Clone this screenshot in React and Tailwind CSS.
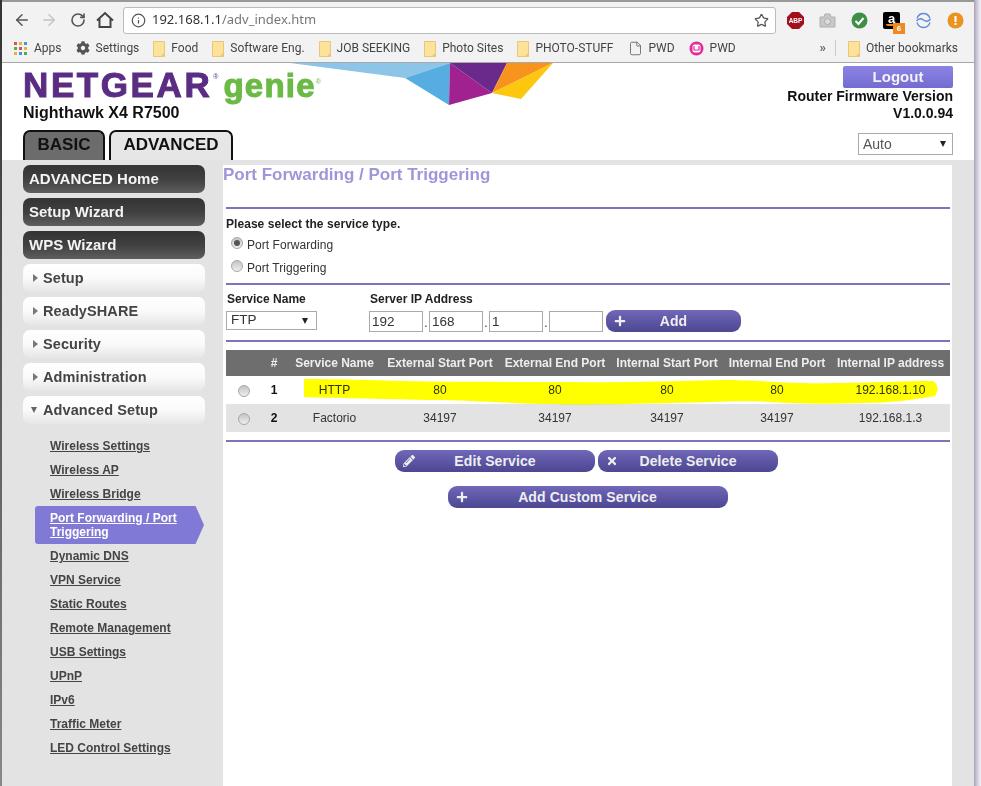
import React from "react";
import { ArrowLeft, ArrowRight, RotateCw, Info, Star, File } from "lucide-react";
import { FaCog, FaPencilAlt, FaTimes, FaPlus } from "react-icons/fa";

const dotColors = [
  "bg-[#d9534f]", "bg-[#e8b23a]", "bg-[#4a8fe0]",
  "bg-[#4caf50]", "bg-[#d9534f]", "bg-[#e8b23a]",
  "bg-[#e8b23a]", "bg-[#4a8fe0]", "bg-[#4caf50]",
];

const subLinks = [
  "Wireless Settings",
  "Wireless AP",
  "Wireless Bridge",
  "Port Forwarding / Port Triggering",
  "Dynamic DNS",
  "VPN Service",
  "Static Routes",
  "Remote Management",
  "USB Settings",
  "UPnP",
  "IPv6",
  "Traffic Meter",
  "LED Control Settings",
];

const rows = [
  { id: 1, name: "HTTP", es: "80", ee: "80", is: "80", ie: "80", ip: "192.168.1.10" },
  { id: 2, name: "Factorio", es: "34197", ee: "34197", is: "34197", ie: "34197", ip: "192.168.1.3" },
];

const Folder = () => (
  <svg width="12" height="17" viewBox="0 0 12 17" className="shrink-0">
    <path d="M0.5 1.5h11v15h-11z" fill="#fde29a" stroke="#e8c777" strokeWidth="1" />
    <path d="M8 16.5l3.500-4v4z" fill="#e8c777" />
  </svg>
);

const Bookmark = ({ icon, label }) => (
  <div className="flex items-center gap-[6px] shrink-0">
    {icon}
    <span>{label}</span>
  </div>
);

const Radio = ({ checked, className }) => (
  <span className={"w-[12px] h-[12px] rounded-full border border-[#a8a8a8] bg-gradient-to-b from-[#c4c4c4] to-[#efefef] flex items-center justify-center shrink-0 " + (className || "")}>
    {checked && <span className="w-[6px] h-[6px] rounded-full bg-[#555]" />}
  </span>
);

const DarkButton = ({ label }) => (
  <div className="h-[28px] rounded-[7px] bg-gradient-to-b from-[#343434] via-[#404040] to-[#5e5e5e] text-[#f4f4f4] font-bold text-[15px] leading-[28px] pl-[6px]">
    {label}
  </div>
);

const LightButton = ({ label, open }) => (
  <div className="h-[28px] rounded-[7px] bg-gradient-to-b from-white via-[#fafafa] to-[#e6e6e6] text-[#444] font-bold text-[14.5px] tracking-[0.1px] leading-[26px] flex items-center">
    {open ? (
      <span className="ml-[8px] mr-[6px] w-0 h-0 border-l-[3px] border-r-[3px] border-t-[6px] border-l-transparent border-r-transparent border-t-[#666]" />
    ) : (
      <span className="ml-[10px] mr-[5px] w-0 h-0 border-t-[4px] border-b-[4px] border-l-[5px] border-t-transparent border-b-transparent border-l-[#777]" />
    )}
    <span>{label}</span>
  </div>
);

const PurpleButton = ({ icon, label, className }) => (
  <div className={"relative h-[22px] rounded-[9px] bg-gradient-to-b from-[#7067b8] to-[#4d4792] text-[#eeeeee] font-bold text-[14px] tracking-[0.1px] leading-[22px] text-center " + className}>
    <span className="absolute left-[8px] top-0 h-[22px] flex items-center text-[12px]">{icon}</span>
    {label}
  </div>
);

const Divider = () => <div className="h-[2px] bg-[#7d74b9]" />;

const Field = ({ value }) => (
  <input
    readOnly
    defaultValue={value}
    className="w-[54px] h-[21px] border border-[#aaa] bg-white text-[13.5px] text-[#333] px-[2px] outline-none"
  />
);

export default function App() {
  return (
    <div className="w-[981px] h-[786px] overflow-hidden flex bg-[#f4f1f6] font-['Liberation_Sans',Arial,sans-serif]">
      <div className="w-[2px] bg-gradient-to-b from-[#333] to-[#888]" />

      <div className="w-[972px] flex flex-col">
        {/* browser chrome */}
        <div className="h-[6px] bg-[#f2f2f2] border-t-2 border-[#999]" />
        <div className="h-[28px] bg-[#f2f2f2] flex items-center pl-[11px] text-[#5a5a5a]">
          <ArrowLeft size={18} strokeWidth={2} className="text-[#555] shrink-0" />
          <ArrowRight size={18} strokeWidth={2} className="text-[#c4c4c4] ml-[9px] shrink-0" />
          <RotateCw size={16} strokeWidth={2.4} className="text-[#555] ml-[12px] shrink-0" />
          <svg width="18" height="18" viewBox="0 0 18 18" className="ml-[10px] shrink-0">
            <path d="M1 9.500L9 2l8 7.500M3.500 8v8h11V8" fill="none" stroke="#444" strokeWidth="2" />
          </svg>
          <div className="ml-[9px] w-[653px] shrink-0 h-[27px] bg-white border border-[#bbb] rounded-[3px] flex items-center pl-[7px] pr-[6px] font-['Noto_Sans',sans-serif] text-[13px]">
            <Info size={15} className="text-[#555]" />
            <span className="ml-[6px] text-[#333]">192.168.1.1</span>
            <span className="text-[#777]">/adv_index.htm</span>
            <Star size={15} strokeWidth={2} className="ml-auto text-[#555]" />
          </div>
          <div className="flex items-center ml-[11px] gap-[15px]">
            <svg width="17" height="17" viewBox="0 0 17 17">
              <polygon points="5,0 12,0 17,5 17,12 12,17 5,17 0,12 0,5" fill="#a3101c" />
              <text x="8.500" y="11" textAnchor="middle" fontSize="6.500" fontWeight="700" fill="#fff" fontFamily="Liberation Sans">ABP</text>
            </svg>
            <svg width="17" height="17" viewBox="0 0 17 17">
              <path d="M1 5h4l1-3h5l1 3h4v10H1z" fill="#c8c8c8" stroke="#b0b0b0" />
              <circle cx="8.500" cy="9.500" r="3" fill="#ddd" stroke="#aaa" />
            </svg>
            <svg width="17" height="17" viewBox="0 0 17 17">
              <circle cx="8.500" cy="8.500" r="8" fill="#3f8f45" />
              <path d="M4.500 9l3 3 5-6" fill="none" stroke="#fff" strokeWidth="2" />
            </svg>
            <div className="relative w-[17px] h-[17px] bg-black rounded-[2px] text-white text-[13px] font-bold leading-[13px] text-center">
              a
              <span className="absolute left-[3px] top-[12px] w-[8px] h-[2px] rounded-b-full bg-[#ee8a1e]" />
              <span className="absolute left-[10px] top-[11px] w-[12px] h-[11px] bg-[#ee8a1e] text-white text-[8px] leading-[11px] font-bold">6</span>
            </div>
            <svg width="17" height="17" viewBox="0 0 17 17">
              <path d="M2 6.500C3 3.500 5.500 1.500 8.500 1.500s5.500 2 6.500 5M2 10.500c1 3 3.500 5 6.500 5s5.500-2 6.500-5" fill="none" stroke="#5a8ad8" strokeWidth="1.300" />
              <path d="M1.500 9c2.500-3 4.500-3 7-1s4.500 2 7-1" fill="none" stroke="#5a8ad8" strokeWidth="1.300" />
            </svg>
            <svg width="17" height="17" viewBox="0 0 17 17">
              <circle cx="8.500" cy="8.500" r="8" fill="#ea9320" />
              <rect x="7.500" y="4" width="2" height="6" fill="#fff" />
              <rect x="7.500" y="11" width="2" height="2" fill="#fff" />
            </svg>
          </div>
        </div>
        <div className="h-[29px] bg-[#f2f2f2] border-b border-[#a8a8a8] flex items-center pl-[12px] pr-[16px] text-[12px] text-[#444] font-['Roboto',sans-serif] gap-[14px]">
          <Bookmark
            label="Apps"
            icon={
              <div className="grid grid-cols-3 gap-[2px] w-[13px] mr-[1px]">
                {dotColors.map((c, i) => (
                  <span key={i} className={"w-[3px] h-[3px] " + c} />
                ))}
              </div>
            }
          />
          <Bookmark label="Settings" icon={<FaCog size={14} className="text-[#555]" />} />
          <Bookmark label="Food" icon={<Folder />} />
          <Bookmark label="Software Eng." icon={<Folder />} />
          <Bookmark label="JOB SEEKING" icon={<Folder />} />
          <Bookmark label="Photo Sites" icon={<Folder />} />
          <Bookmark label="PHOTO-STUFF" icon={<Folder />} />
          <Bookmark label="PWD" icon={<File size={15} strokeWidth={1.4} className="text-[#666]" />} />
          <Bookmark
            label="PWD"
            icon={
              <svg width="15" height="15" viewBox="0 0 15 15">
                <circle cx="7.500" cy="7.500" r="7" fill="#e52a9f" />
                <rect x="3.500" y="3.500" width="8" height="8" rx="2" fill="#fff" />
                <path d="M5 5v4h5V5" fill="none" stroke="#e52a9f" strokeWidth="1.200" />
              </svg>
            }
          />
          <span className="ml-auto text-[13px] font-bold text-[#666]">»</span>
          <span className="w-px h-[16px] bg-[#ccc] ml-[-5px] mr-[-2px]" />
          <Bookmark label="Other bookmarks" icon={<Folder />} />
        </div>

        {/* router header */}
        <div className="relative h-[97px] bg-white flex justify-between pl-[21px] pr-[21px] shrink-0">
          <svg width="270" height="45" viewBox="0 0 270 45" className="absolute left-[288px] top-0">
            <polygon points="0,0 160,0 115,15" fill="#8cc5e8" />
            <polygon points="115,15 160,0 159,42" fill="#55ade2" />
            <polygon points="160,0 202,30 159,42" fill="#a0218f" />
            <polygon points="160,0 217,0 202,30" fill="#6a2a8c" />
            <polygon points="217,0 263,0 202,30" fill="#f7941d" />
            <polygon points="263,0 231,36 202,30" fill="#fdc70f" />
          </svg>
          <div className="flex flex-col">
            <div className="h-[41px] pt-[3px] whitespace-nowrap leading-[38px]">
              <span className="text-[35px] font-bold text-[#5b2c83] tracking-[2.6px] [-webkit-text-stroke:1px_#5b2c83]">NETGEAR</span>
              <span className="text-[7px] leading-[7px] align-[18px] ml-[1px] text-[#5b2c83]">®</span>
              <span className="text-[33px] font-bold text-[#6cba46] tracking-[1.2px] ml-[5px] [-webkit-text-stroke:1.1px_#6cba46]">genie</span>
              <span className="text-[7px] leading-[7px] align-[13px] text-[#6cba46]">®</span>
            </div>
            <div className="text-[16px] leading-[18px] font-bold text-[#111]">Nighthawk X4 R7500</div>
            <div className="flex gap-[4px] mt-auto">
              <div className="w-[82px] h-[30px] rounded-t-[7px] border-2 border-b-0 border-[#111] bg-[#6c6c6c] text-[#111] font-bold text-[17px] leading-[26px] text-center">BASIC</div>
              <div className="w-[124px] h-[30px] rounded-t-[7px] border-2 border-b-0 border-[#111] bg-[#e6e6e6] text-[#111] font-bold text-[17px] leading-[26px] text-center">ADVANCED</div>
            </div>
          </div>
          <div className="flex flex-col items-end relative">
            <div className="mt-[3px] w-[110px] h-[22px] rounded-[2px] bg-gradient-to-b from-[#8c84e4] to-[#746bd0] text-[#f2f2f2] font-bold text-[15px] leading-[22px] text-center">Logout</div>
            <div className="text-[14px] leading-[17px] font-bold text-[#111] text-right">Router Firmware Version</div>
            <div className="text-[14px] leading-[17px] font-bold text-[#111] text-right">V1.0.0.94</div>
            <div className="mt-auto mb-[5px] w-[95px] h-[22px] border border-[#aaa] bg-white text-[14px] text-[#555] flex items-center justify-between pl-[4px] pr-[6px]">
              Auto
              <span className="w-0 h-0 border-l-[3px] border-r-[3px] border-t-[6px] border-l-transparent border-r-transparent border-t-[#222]" />
            </div>
          </div>
        </div>

        {/* page body */}
        <div className="flex-1 bg-[#e3e3e3] flex pt-[5px]">
          <div className="w-[221px] shrink-0 pl-[21px] pr-[18px]">
            <div className="flex flex-col gap-[5px]">
              <DarkButton label="ADVANCED Home" />
              <DarkButton label="Setup Wizard" />
              <DarkButton label="WPS Wizard" />
              <LightButton label="Setup" />
              <LightButton label="ReadySHARE" />
              <LightButton label="Security" />
              <LightButton label="Administration" />
              <LightButton label="Advanced Setup" open />
            </div>
            <div className="mt-[10px] ml-[12px] mr-[1px] flex flex-col">
              {subLinks.map((link) =>
                link.startsWith("Port") ? (
                  <div
                    key={link}
                    className="h-[38px] bg-[#8179d6] rounded-l-[3px] [clip-path:polygon(0_0,95%_0,100%_50%,95%_100%,0_100%)] text-white font-bold text-[12px] leading-[14px] underline pl-[15px] pt-[5px] pr-[20px]"
                  >
                    {link}
                  </div>
                ) : (
                  <div key={link} className="h-[24px] pl-[15px] text-[#444] font-bold text-[12px] leading-[24px] underline">
                    {link}
                  </div>
                )
              )}
            </div>
          </div>

          <div className="w-[729px] shrink-0 bg-white pl-[3px] pr-[2px] text-[12px] text-[#333]">
            <div className="h-[42px] ml-[-3px] text-[17px] font-bold leading-[20px] text-[#9d96da]">Port Forwarding / Port Triggering</div>
            <Divider />
            <div className="h-[74px] pt-[7px]">
              <div className="font-bold leading-[16px] text-[#222] tracking-[0.05px]">Please select the service type.</div>
              <div className="flex items-center h-[23px] pl-[5px] pt-[3px] gap-[4px] tracking-[0.05px]"><Radio checked className="mt-[-5px]" />Port Forwarding</div>
              <div className="flex items-center h-[23px] pl-[5px] pt-[3px] gap-[4px] tracking-[0.05px]"><Radio className="mt-[-5px]" />Port Triggering</div>
            </div>
            <Divider />
            <div className="h-[55px] pt-[7px] flex">
              <div className="w-[143px]">
                <div className="font-bold leading-[14px] text-[#222] pl-[1px]">Service Name</div>
                <div className="mt-[5px] w-[91px] h-[19px] border border-[#aaa] text-[13.5px] flex items-center justify-between pl-[4px] pr-[8px]">
                  FTP
                  <span className="w-0 h-0 border-l-[3px] border-r-[3px] border-t-[6px] border-l-transparent border-r-transparent border-t-[#222]" />
                </div>
              </div>
              <div>
                <div className="font-bold leading-[14px] text-[#222] pl-[1px]">Server IP Address</div>
                <div className="mt-[4px] flex items-end">
                  <Field value="192" />
                  <span className="w-[6px] text-center">.</span>
                  <Field value="168" />
                  <span className="w-[6px] text-center">.</span>
                  <Field value="1" />
                  <span className="w-[6px] text-center">.</span>
                  <Field value="" />
                  <PurpleButton icon={<FaPlus />} label="Add" className="w-[135px] ml-[3px] self-start" />
                </div>
              </div>
            </div>
            <Divider />
            <div className="relative mt-[8px]">
              <table className="w-full table-fixed border-collapse">
                <colgroup>
                  <col className="w-[34px]" />
                  <col className="w-[28px]" />
                  <col className="w-[93px]" />
                  <col className="w-[118px]" />
                  <col className="w-[112px]" />
                  <col className="w-[112px]" />
                  <col className="w-[108px]" />
                  <col />
                </colgroup>
                <thead>
                  <tr className="h-[26px] bg-[#6e6e6e] text-[#eeeeee] font-bold">
                    <th />
                    <th>#</th>
                    <th className="whitespace-nowrap">Service Name</th>
                    <th className="whitespace-nowrap">External Start Port</th>
                    <th className="whitespace-nowrap">External End Port</th>
                    <th className="whitespace-nowrap">Internal Start Port</th>
                    <th className="whitespace-nowrap">Internal End Port</th>
                    <th className="whitespace-nowrap">Internal IP address</th>
                  </tr>
                </thead>
                <tbody>
                  {rows.map((r) => (
                    <tr key={r.id} className={"h-[28px] text-center " + (r.id === 2 ? "bg-[#e3e3e3]" : "bg-white")}>
                      <td><span className="flex justify-center pl-[2px] pt-[2px]"><Radio /></span></td>
                      <td className="font-bold text-[#111]">{r.id}</td>
                      <td>{r.name}</td>
                      <td>{r.es}</td>
                      <td>{r.ee}</td>
                      <td>{r.is}</td>
                      <td>{r.ie}</td>
                      <td>{r.ip}</td>
                    </tr>
                  ))}
                </tbody>
              </table>
              {/* marker scribble over first row */}
              <svg width="640" height="30" viewBox="0 0 640 30" className="absolute left-[75px] top-[26px] mix-blend-multiply pointer-events-none">
                <path
                  d="M3 3 C40 3 70 4 100 5 C160 6 220 6 270 6 C320 7 370 5 420 4 C450 4 470 6 500 7 C540 8 600 5 632 5 C637 8 638 14 634 20 C610 24 590 27 560 27 C530 28 500 28 470 26 C440 24 410 26 370 27 C330 28 280 29 240 28 C200 27 170 24 130 24 C90 23 40 22 3 21 Z"
                  fill="#ffff00"
                />
              </svg>
            </div>
            <div className="mt-[8px]"><Divider /></div>
            <div className="mt-[8px] flex justify-center gap-[3px] ml-[-3px]">
              <PurpleButton icon={<FaPencilAlt />} label="Edit Service" className="w-[200px]" />
              <PurpleButton icon={<FaTimes />} label="Delete Service" className="w-[180px]" />
            </div>
            <div className="mt-[14px] flex justify-center ml-[-1px]">
              <PurpleButton icon={<FaPlus />} label="Add Custom Service" className="w-[280px]" />
            </div>
          </div>
        </div>
      </div>

      <div className="w-[7px] bg-gradient-to-r from-[#a8a2b8] via-[#d4cfdd] to-[#f4f1f6]" />
    </div>
  );
}
